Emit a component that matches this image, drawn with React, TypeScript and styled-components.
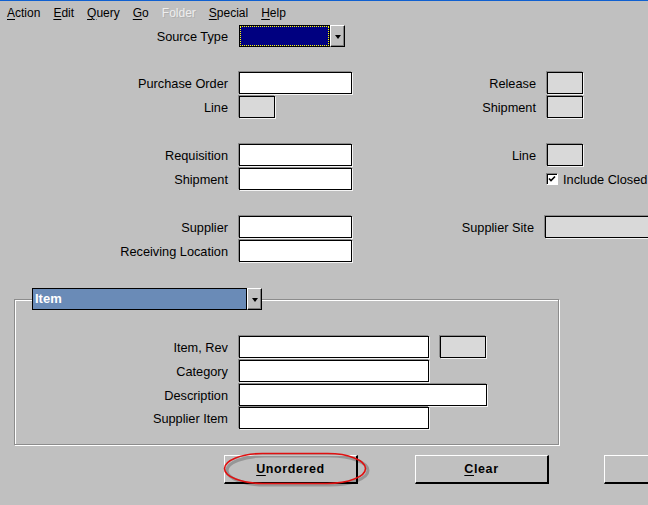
import React from "react";
import styled, { createGlobalStyle } from "styled-components";

const GlobalStyle = createGlobalStyle`
  html, body {
    margin: 0;
    padding: 0;
    background: #c0c0c0;
  }
  * {
    box-sizing: border-box;
  }
`;

const Screen = styled.div`
  width: 648px;
  height: 505px;
  overflow: hidden;
  background: #c0c0c0;
  border-top: 1px solid #1060d0;
  font-family: "Liberation Sans", Arial, sans-serif;
  font-size: 12.75px;
  color: #000;
`;

const MenuBar = styled.div`
  display: flex;
  align-items: center;
  height: 23px;
  padding-left: 7px;
  gap: 13px;
  font-size: 12px;
`;

const MenuItem = styled.span<{ disabled?: boolean }>`
  color: ${({ disabled }) => (disabled ? "#eeeeee" : "#000")};
  text-shadow: ${({ disabled }) => (disabled ? "1px 1px 0 #b0b0b0" : "none")};
  cursor: default;
  u {
    text-decoration-thickness: 1px;
    text-underline-offset: 2px;
  }
`;

// one form line: label column, field column, right label column, right field
const Row = styled.div<{ top: number; labelWidth?: number }>`
  display: grid;
  grid-template-columns: ${({ labelWidth }) => labelWidth ?? 228}px auto 1fr;
  align-items: center;
  column-gap: 11px;
  height: 22px;
  margin-top: ${({ top }) => top}px;
`;

const Label = styled.span`
  text-align: right;
  white-space: nowrap;
  padding-top: 1px;
`;

const FieldGroup = styled.div`
  display: flex;
  align-items: center;
  gap: 11px;
`;

const Field = styled.div<{ w: number; grey?: boolean }>`
  width: ${({ w }) => w}px;
  height: 22px;
  background: ${({ grey }) => (grey ? "#d9d9d9" : "#fff")};
  border: 1px solid #000;
  box-shadow: -1px -1px 0 #8a8a8a, 1px 1px 0 #f4f4f4;
`;

const RightCell = styled.div<{ labelWidth?: number }>`
  display: grid;
  grid-template-columns: ${({ labelWidth }) => labelWidth ?? 173}px auto;
  column-gap: 11px;
  align-items: center;
`;

const Combo = styled.div`
  display: flex;
  height: 22px;
`;

const ComboValue = styled.div<{ w: number; tone: "focus" | "header" }>`
  width: ${({ w }) => w}px;
  height: 100%;
  border: 1px solid #000;
  background: ${({ tone }) => (tone === "focus" ? "#000080" : "#6a8bb7")};
  outline: ${({ tone }) => (tone === "focus" ? "1px dotted #ffff00" : "none")};
  outline-offset: -2px;
  color: #fff;
  font-weight: bold;
  font-size: 13px;
  padding-left: 2px;
  line-height: 19px;
`;

const ComboButton = styled.div`
  width: 15px;
  height: 100%;
  background: #c0c0c0;
  border-top: 1px solid #fff;
  border-left: 1px solid #fff;
  border-right: 1px solid #000;
  border-bottom: 1px solid #000;
  box-shadow: inset -1px -1px 0 #808080;
  display: flex;
  align-items: center;
  justify-content: center;
`;

const Arrow = styled.span`
  width: 0;
  height: 0;
  border-left: 3.5px solid transparent;
  border-right: 3.5px solid transparent;
  border-top: 4px solid #000;
  margin-top: 1px;
`;

const CheckRow = styled.label`
  display: flex;
  align-items: center;
  gap: 5px;
  margin-left: -1px;
  white-space: nowrap;
`;

const CheckBox = styled.span`
  width: 12px;
  height: 12px;
  background: #fff;
  border-top: 1px solid #808080;
  border-left: 1px solid #808080;
  border-right: 1px solid #fff;
  border-bottom: 1px solid #fff;
  box-shadow: inset 1px 1px 0 #000;
  display: flex;
  align-items: center;
  justify-content: center;
`;

const Frame = styled.div`
  position: relative;
  margin: 37px 0 0 14px;
  width: 545px;
  height: 146px;
  border: 1px solid #8c8c8c;
  box-shadow: inset 1px 1px 0 #fff, 1px 1px 0 #fff;
  padding-top: 36px;
`;

const FrameTitle = styled.div`
  position: absolute;
  left: 17px;
  top: -12px;
`;

const ButtonBar = styled.div`
  display: flex;
  gap: 57px;
  margin: 10px 0 0 224px;
`;

const ButtonWrap = styled.div`
  position: relative;
  flex-shrink: 0;
`;

const Button = styled.div<{ w?: number; pull?: number }>`
  flex-shrink: 0;
  width: ${({ w }) => w ?? 134}px;
  margin-left: ${({ pull }) => (pull ? -pull : 0)}px;
  height: 29px;
  background: #c0c0c0;
  border-top: 1px solid #fff;
  border-left: 1px solid #fff;
  border-right: 2px solid #000;
  border-bottom: 2px solid #000;
  display: flex;
  align-items: center;
  justify-content: center;
  font-weight: bold;
  font-size: 12.5px;
  letter-spacing: 0.6px;
  u {
    text-underline-offset: 2px;
  }
`;

const Highlight = styled.svg`
  position: absolute;
  left: -1px;
  top: -3px;
  pointer-events: none;
`;

const FocusCombo = ({ w, tone, text }: { w: number; tone: "focus" | "header"; text?: string }) => (
  <Combo>
    <ComboValue w={w} tone={tone}>
      {text}
    </ComboValue>
    <ComboButton>
      <Arrow />
    </ComboButton>
  </Combo>
);

const menu = [
  { k: "A", rest: "ction" },
  { k: "E", rest: "dit" },
  { k: "Q", rest: "uery" },
  { k: "G", rest: "o" },
  { k: "", rest: "Folder", disabled: true },
  { k: "S", rest: "pecial" },
  { k: "H", rest: "elp" },
];

export default function App() {
  return (
    <Screen>
      <GlobalStyle />
      <MenuBar>
        {menu.map((m) => (
          <MenuItem key={m.rest} disabled={m.disabled}>
            {m.k && <u>{m.k}</u>}
            {m.rest}
          </MenuItem>
        ))}
      </MenuBar>

      <Row top={1}>
        <Label>Source Type</Label>
        <FocusCombo w={91} tone="focus" />
      </Row>

      <Row top={25}>
        <Label>Purchase Order</Label>
        <Field w={113} />
        <RightCell>
          <Label>Release</Label>
          <Field w={36} grey />
        </RightCell>
      </Row>
      <Row top={2}>
        <Label>Line</Label>
        <Field w={36} grey />
        <RightCell labelWidth={250}>
          <Label>Shipment</Label>
          <Field w={36} grey />
        </RightCell>
      </Row>

      <Row top={26}>
        <Label>Requisition</Label>
        <Field w={113} />
        <RightCell>
          <Label>Line</Label>
          <Field w={36} grey />
        </RightCell>
      </Row>
      <Row top={2}>
        <Label>Shipment</Label>
        <Field w={113} />
        <RightCell>
          <span />
          <CheckRow>
            <CheckBox>
              <svg width="8" height="8" viewBox="0 0 8 8">
                <path d="M1 3.5 L3 5.5 L7 1.5" stroke="#000" strokeWidth="1.6" fill="none" />
              </svg>
            </CheckBox>
            Include Closed
          </CheckRow>
        </RightCell>
      </Row>

      <Row top={26}>
        <Label>Supplier</Label>
        <Field w={113} />
        <RightCell labelWidth={171}>
          <Label>Supplier Site</Label>
          <Field w={120} grey />
        </RightCell>
      </Row>
      <Row top={2}>
        <Label>Receiving Location</Label>
        <Field w={113} />
      </Row>

      <Frame>
        <FrameTitle>
          <FocusCombo w={215} tone="header" text="Item" />
        </FrameTitle>
        <Row top={0} labelWidth={213}>
          <Label>Item, Rev</Label>
          <FieldGroup>
            <Field w={190} />
            <Field w={46} grey />
          </FieldGroup>
        </Row>
        <Row top={2} labelWidth={213}>
          <Label>Category</Label>
          <Field w={190} />
        </Row>
        <Row top={2} labelWidth={213}>
          <Label>Description</Label>
          <Field w={248} />
        </Row>
        <Row top={1} labelWidth={213}>
          <Label>Supplier Item</Label>
          <Field w={190} />
        </Row>
      </Frame>

      <ButtonBar>
        <ButtonWrap>
          <Button>
            <span>
              <u>U</u>nordered
            </span>
          </Button>
          <Highlight width="148" height="37" viewBox="0 0 148 37">
            <rect x="4" y="4" width="141" height="29" rx="38" ry="15" fill="none" stroke="rgba(0,0,0,0.22)" strokeWidth="3" />
            <rect x="1.5" y="1.5" width="141" height="30" rx="38" ry="15" fill="none" stroke="#e01010" strokeWidth="1.6" />
          </Highlight>
        </ButtonWrap>
        <Button>
          <span>
            <u>C</u>lear
          </span>
        </Button>
        <Button w={60} pull={2} />
      </ButtonBar>
    </Screen>
  );
}
